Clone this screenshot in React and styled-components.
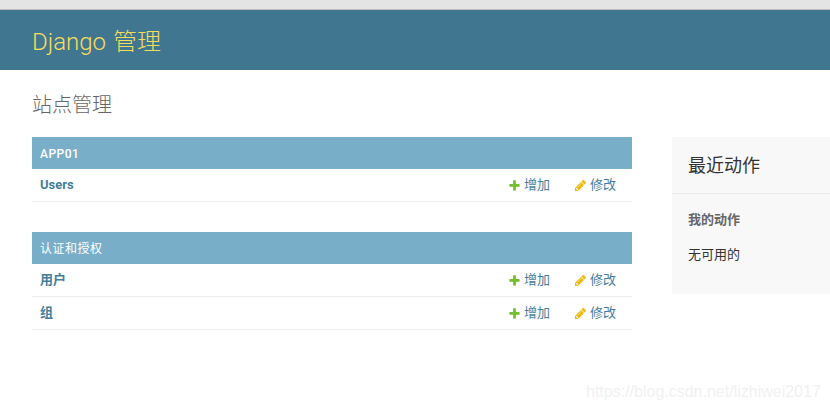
import React from 'react';
import styled, { createGlobalStyle } from 'styled-components';

const GlobalStyle = createGlobalStyle`
    html, body {
        margin: 0;
        padding: 0;
        background: #fff;
        overflow: hidden;
    }
    body {
        font-family: Roboto, "Noto Sans CJK SC", sans-serif;
        font-size: 13px;
        line-height: 16px;
        color: #333;
    }
`;

const Page = styled.div`
    position: relative;
    width: 830px;
    height: 409px;
    overflow: hidden;
`;

const BrowserEdge = styled.div`
    height: 9px;
    background: #e4e4e4;
    border-bottom: 1px solid #bcbcbc;
`;

const Header = styled.header`
    height: 42px;
    background: #417690;
    padding: 18px 32px 0;
`;

const Branding = styled.h1`
    margin: 0;
    font-size: 24px;
    line-height: 28px;
    font-weight: 300;
    color: #f5dd5d;
    word-spacing: 1px;
`;

const Content = styled.main`
    padding: 24px 0 0 32px;
`;

const PageTitle = styled.h2`
    margin: 0 0 20px;
    font-size: 20px;
    line-height: 23px;
    font-weight: 300;
    color: #666;
`;

const Columns = styled.div`
    display: flex;
    justify-content: space-between;
    align-items: flex-start;
`;

const Modules = styled.div`
    width: 600px;
    display: flex;
    flex-direction: column;
    gap: 30px;
`;

const Caption = styled.div`
    height: 30px;
    padding: 2px 8px 0;
    display: flex;
    align-items: center;
    background: #79aec8;
    color: #fff;
    font-size: 12px;
    font-weight: ${props => (props.$cjk ? 400 : 500)};
    letter-spacing: 0.5px;
`;

const Row = styled.div`
    height: 32px;
    padding: 0 16px 0 8px;
    display: flex;
    align-items: center;
    border-bottom: 1px solid #eee;
`;

const ModelName = styled.span`
    flex: 1;
    color: #447e9b;
    font-weight: 700;
`;

const Action = styled.span`
    display: flex;
    align-items: center;
    gap: 3px;
    color: #447e9b;
    margin-left: ${props => props.$gap || 0}px;
`;

const Sidebar = styled.aside`
    width: 158px;
    height: 157px;
    background: #f8f8f8;
`;

const SidebarTitle = styled.h2`
    margin: 0;
    height: 54px;
    padding: 2px 16px 0;
    display: flex;
    align-items: center;
    font-size: 18px;
    line-height: 22px;
    font-weight: 400;
    color: #333;
    border-bottom: 1px solid #eaeaea;
`;

const SidebarBody = styled.div`
    padding: 17px 16px 0;
`;

const SidebarHeading = styled.h3`
    margin: 0 0 17px;
    font-size: 13px;
    line-height: 18px;
    font-weight: 700;
    color: #666;
`;

const SidebarText = styled.p`
    margin: 0;
    font-size: 13px;
    line-height: 18px;
    color: #333;
`;

const Watermark = styled.span`
    position: absolute;
    left: 586px;
    top: 383px;
    font-family: "Liberation Sans", sans-serif;
    font-size: 16px;
    line-height: 18px;
    color: #f1f1f1;
    white-space: nowrap;
`;

function PlusIcon(){
    return(
        <svg width="13" height="13" viewBox="0 0 1792 1792">
            <path fill="#70bf2b" d="M1600 796v192q0 40-28 68t-68 28h-416v416q0 40-28 68t-68 28h-192q-40 0-68-28t-28-68v-416h-416q-40 0-68-28t-28-68v-192q0-40 28-68t68-28h416v-416q0-40 28-68t68-28h192q40 0 68 28t28 68v416h416q40 0 68 28t28 68z"/>
        </svg>
    );
}

function PencilIcon(){
    return(
        <svg width="13" height="13" viewBox="0 0 1792 1792">
            <path fill="#efb80b" d="M491 1536l91-91-235-235-91 91v107h128v128h107zm523-928q0-22-22-22-10 0-17 7l-542 542q-7 7-7 17 0 22 22 22 10 0 17-7l542-542q7-7 7-17zm-54-192l416 416-832 832h-416v-416zm683 96q0 53-37 90l-166 166-416-416 166-165q36-38 90-38 53 0 91 38l235 234q37 39 37 91z"/>
        </svg>
    );
}

function ModelRow({ name }){
    return(
        <Row>
            <ModelName>{name}</ModelName>
            <Action><PlusIcon/>增加</Action>
            <Action $gap={24}><PencilIcon/>修改</Action>
        </Row>
    );
}

const modules = [
    { caption: 'APP01', models: ['Users'] },
    { caption: '认证和授权', cjk: true, models: ['用户', '组'] },
];

export default function App(){
    return(
        <Page>
            <GlobalStyle/>
            <BrowserEdge/>
            <Header>
                <Branding>Django 管理</Branding>
            </Header>
            <Content>
                <PageTitle>站点管理</PageTitle>
                <Columns>
                    <Modules>
                        {modules.map(m => (
                            <section key={m.caption}>
                                <Caption $cjk={m.cjk}>{m.caption}</Caption>
                                {m.models.map(name => <ModelRow key={name} name={name}/>)}
                            </section>
                        ))}
                    </Modules>
                    <Sidebar>
                        <SidebarTitle>最近动作</SidebarTitle>
                        <SidebarBody>
                            <SidebarHeading>我的动作</SidebarHeading>
                            <SidebarText>无可用的</SidebarText>
                        </SidebarBody>
                    </Sidebar>
                </Columns>
            </Content>
            <Watermark>https://blog.csdn.net/lizhiwei2017</Watermark>
        </Page>
    );
}
